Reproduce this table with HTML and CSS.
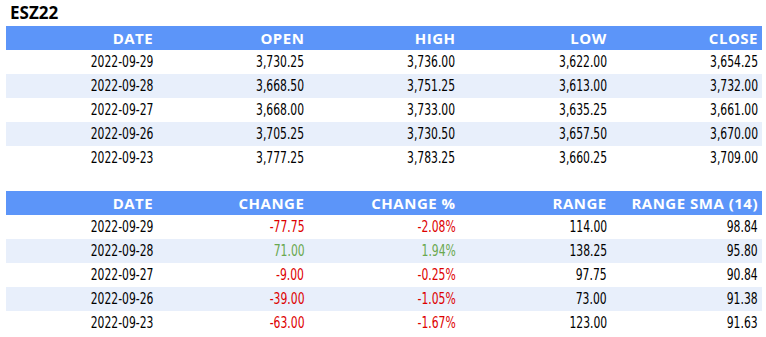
FILE: index.html
```html
<!DOCTYPE html>
<html lang="en">
<head>
    <meta charset="UTF-8">
    <meta name="viewport" content="width=device-width, initial-scale=1.0">
    <title>ESZ22</title>
    <link rel="stylesheet" href="styles.css">
</head>
<body>

<div class="container">
    <h1 class="symbol">ESZ22</h1>

    <table class="quotes">
        <thead>
            <tr>
                <th>DATE</th>
                <th>OPEN</th>
                <th>HIGH</th>
                <th>LOW</th>
                <th>CLOSE</th>
            </tr>
        </thead>
        <tbody>
            <tr><td><span>2022-09-29</span></td><td><span>3,730.25</span></td><td><span>3,736.00</span></td><td><span>3,622.00</span></td><td><span>3,654.25</span></td></tr>
            <tr><td><span>2022-09-28</span></td><td><span>3,668.50</span></td><td><span>3,751.25</span></td><td><span>3,613.00</span></td><td><span>3,732.00</span></td></tr>
            <tr><td><span>2022-09-27</span></td><td><span>3,668.00</span></td><td><span>3,733.00</span></td><td><span>3,635.25</span></td><td><span>3,661.00</span></td></tr>
            <tr><td><span>2022-09-26</span></td><td><span>3,705.25</span></td><td><span>3,730.50</span></td><td><span>3,657.50</span></td><td><span>3,670.00</span></td></tr>
            <tr><td><span>2022-09-23</span></td><td><span>3,777.25</span></td><td><span>3,783.25</span></td><td><span>3,660.25</span></td><td><span>3,709.00</span></td></tr>
        </tbody>
    </table>

    <table class="quotes stats">
        <thead>
            <tr>
                <th>DATE</th>
                <th>CHANGE</th>
                <th>CHANGE %</th>
                <th>RANGE</th>
                <th>RANGE SMA (14)</th>
            </tr>
        </thead>
        <tbody>
            <tr><td><span>2022-09-29</span></td><td class="down"><span>-77.75</span></td><td class="down"><span>-2.08%</span></td><td><span>114.00</span></td><td><span>98.84</span></td></tr>
            <tr><td><span>2022-09-28</span></td><td class="up"><span>71.00</span></td><td class="up"><span>1.94%</span></td><td><span>138.25</span></td><td><span>95.80</span></td></tr>
            <tr><td><span>2022-09-27</span></td><td class="down"><span>-9.00</span></td><td class="down"><span>-0.25%</span></td><td><span>97.75</span></td><td><span>90.84</span></td></tr>
            <tr><td><span>2022-09-26</span></td><td class="down"><span>-39.00</span></td><td class="down"><span>-1.05%</span></td><td><span>73.00</span></td><td><span>91.38</span></td></tr>
            <tr><td><span>2022-09-23</span></td><td class="down"><span>-63.00</span></td><td class="down"><span>-1.67%</span></td><td><span>123.00</span></td><td><span>91.63</span></td></tr>
        </tbody>
    </table>
</div>

</body>
</html>
```

FILE: styles.css
```css
body {
    margin: 0;
    padding: 0 4px 0 6px;
    background-color: #fff;
    font-family: "DejaVu Sans Condensed", "DejaVu Sans", sans-serif;
}
.container {
    display: flex;
    flex-direction: column;
}
.symbol {
    margin: 0;
    padding: 3px 0 0 4px;
    height: 23px;
    font-family: "Open Sans", sans-serif;
    font-size: 17px;
    font-weight: 700;
    line-height: 20px;
    color: #000;
}
.quotes {
    width: 100%;
    border-collapse: collapse;
    table-layout: fixed;
}
.stats {
    margin-top: 21px;
}
.quotes th {
    height: 24px;
    padding: 0 4px 0 0;
    background-color: #5c95f9;
    color: #fff;
    font-family: "Open Sans", sans-serif;
    font-size: 15px;
    font-weight: 700;
    letter-spacing: 0.5px;
    text-align: right;
}
.quotes td {
    height: 24px;
    padding: 0 4px 0 0;
    font-size: 15px;
    color: #000;
    text-align: right;
}
/* condensed look of the original numbers */
.quotes td span {
    display: inline-block;
    transform: scaleX(0.8);
    transform-origin: right center;
}
.quotes tbody tr:nth-child(even) {
    background-color: #e8effb;
}
.quotes td.down {
    color: #dd0000;
}
.quotes td.up {
    color: #6aa84f;
}
```
